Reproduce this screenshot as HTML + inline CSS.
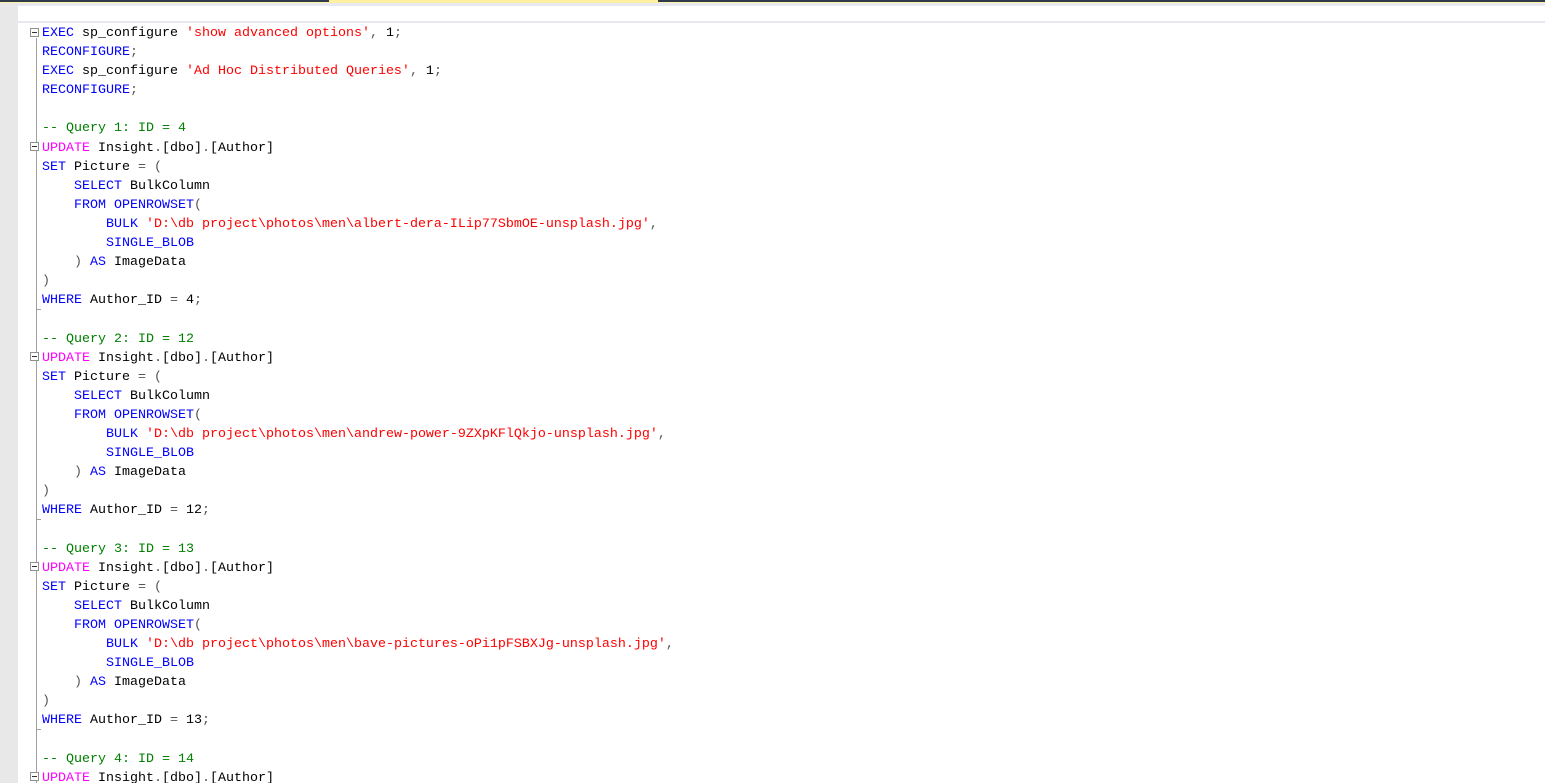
<!DOCTYPE html>
<html><head><meta charset="utf-8"><style>
html,body{margin:0;padding:0;width:1545px;height:783px;overflow:hidden;background:#fff;position:relative}
.gs{position:absolute;left:0;top:0;width:18px;height:783px;background:#e8e8e8}
.top{position:absolute;left:0;top:0;width:1545px;height:2px;background:#2f3a4c}
.y1{position:absolute;left:0;top:2px;width:1545px;height:1px;background:#fdf3a0}
.y2{position:absolute;left:329px;top:0;width:329px;height:3px;background:#fdf0a0}
.lav{position:absolute;left:18px;top:3px;width:1527px;height:3px;background:#e8e8f2}
.hl{position:absolute;left:18px;top:21px;width:1527px;height:2px;background:#e8e8f0}
.vl{position:absolute;left:36px;width:1px;background:#a0a0a0}
.tick{position:absolute;left:36px;width:5px;height:1px;background:#a0a0a0}
.box{position:absolute;left:30px;width:7px;height:7px;border:1px solid #909090;background:#fff}
.box:after{content:"";position:absolute;left:1px;top:3px;width:5px;height:1px;background:#333}
.code{position:absolute;left:42px;top:24px;font-family:"Liberation Mono",monospace;font-size:13.33px;line-height:19.1px;white-space:pre;color:#000}
.k{color:#0000ff}.s{color:#ff0000}.c{color:#008000}.m{color:#ff00ff}.g{color:#555}
</style></head><body>
<div class="gs"></div>
<div class="top"></div><div class="y1"></div><div class="y2"></div><div class="lav"></div><div class="hl"></div>
<div class="vl" style="top:38px;height:745px"></div>
<div class="box" style="top:28px"></div>
<div class="box" style="top:142px"></div>
<div class="box" style="top:352px"></div>
<div class="box" style="top:562px"></div>
<div class="box" style="top:772px"></div>
<div class="tick" style="top:309px"></div>
<div class="tick" style="top:519px"></div>
<div class="tick" style="top:729px"></div>
<div class="code"><span class="k">EXEC</span> sp_configure <span class="s">'show advanced options'</span><span class="g">,</span> 1<span class="g">;</span>
<span class="k">RECONFIGURE</span><span class="g">;</span>
<span class="k">EXEC</span> sp_configure <span class="s">'Ad Hoc Distributed Queries'</span><span class="g">,</span> 1<span class="g">;</span>
<span class="k">RECONFIGURE</span><span class="g">;</span>

<span class="c">-- Query 1: ID = 4</span>
<span class="m">UPDATE</span> Insight<span class="g">.</span>[dbo]<span class="g">.</span>[Author]
<span class="k">SET</span> Picture <span class="g">=</span> <span class="g">(</span>
    <span class="k">SELECT</span> BulkColumn
    <span class="k">FROM</span> <span class="k">OPENROWSET</span><span class="g">(</span>
        <span class="k">BULK</span> <span class="s">'D:\db project\photos\men\albert-dera-ILip77SbmOE-unsplash.jpg'</span><span class="g">,</span>
        <span class="k">SINGLE_BLOB</span>
    <span class="g">)</span> <span class="k">AS</span> ImageData
<span class="g">)</span>
<span class="k">WHERE</span> Author_ID <span class="g">=</span> 4<span class="g">;</span>

<span class="c">-- Query 2: ID = 12</span>
<span class="m">UPDATE</span> Insight<span class="g">.</span>[dbo]<span class="g">.</span>[Author]
<span class="k">SET</span> Picture <span class="g">=</span> <span class="g">(</span>
    <span class="k">SELECT</span> BulkColumn
    <span class="k">FROM</span> <span class="k">OPENROWSET</span><span class="g">(</span>
        <span class="k">BULK</span> <span class="s">'D:\db project\photos\men\andrew-power-9ZXpKFlQkjo-unsplash.jpg'</span><span class="g">,</span>
        <span class="k">SINGLE_BLOB</span>
    <span class="g">)</span> <span class="k">AS</span> ImageData
<span class="g">)</span>
<span class="k">WHERE</span> Author_ID <span class="g">=</span> 12<span class="g">;</span>

<span class="c">-- Query 3: ID = 13</span>
<span class="m">UPDATE</span> Insight<span class="g">.</span>[dbo]<span class="g">.</span>[Author]
<span class="k">SET</span> Picture <span class="g">=</span> <span class="g">(</span>
    <span class="k">SELECT</span> BulkColumn
    <span class="k">FROM</span> <span class="k">OPENROWSET</span><span class="g">(</span>
        <span class="k">BULK</span> <span class="s">'D:\db project\photos\men\bave-pictures-oPi1pFSBXJg-unsplash.jpg'</span><span class="g">,</span>
        <span class="k">SINGLE_BLOB</span>
    <span class="g">)</span> <span class="k">AS</span> ImageData
<span class="g">)</span>
<span class="k">WHERE</span> Author_ID <span class="g">=</span> 13<span class="g">;</span>

<span class="c">-- Query 4: ID = 14</span>
<span class="m">UPDATE</span> Insight<span class="g">.</span>[dbo]<span class="g">.</span>[Author]</div>
</body></html>
